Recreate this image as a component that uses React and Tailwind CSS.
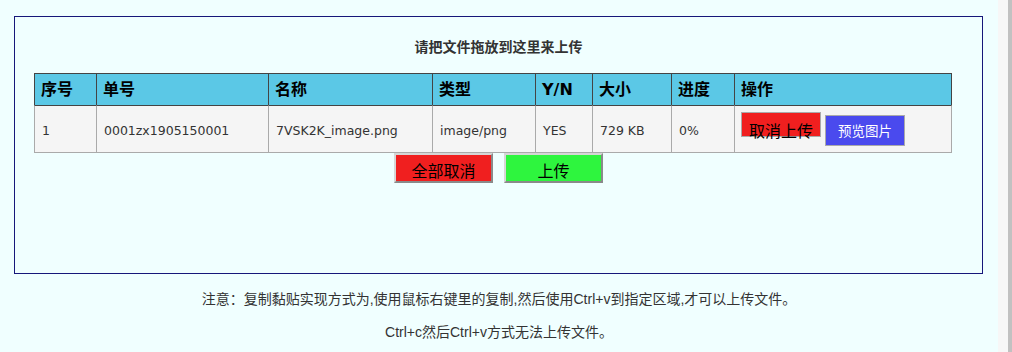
const head = "h-[32px] border-l border-t border-[#444] bg-[#5bc8e6] flex items-center pl-[6px] font-bold text-[16px] text-black";
const cell = "h-[48px] border-l border-b border-[#aaa] border-t border-t-[#444] bg-[#f5f5f5] flex items-center pl-[7px] pt-[5px] text-[12.5px] text-[#333] whitespace-nowrap";

export default function App() {
  return (
    <div className="flex w-[1012px] h-[352px] bg-[#f0ffff] overflow-hidden font-['DejaVu_Sans','Noto_Sans_CJK_SC',sans-serif]">
      <main className="w-[998px] shrink-0">
        <section className="mt-[16px] ml-[14px] mr-[15px] h-[258px] border border-[#17177a]">
          <h2 className="pt-[19px] text-center text-[14px] leading-[20px] font-bold text-[#333] font-['Noto_Sans_CJK_SC',sans-serif]">
            请把文件拖放到这里来上传
          </h2>
          <div className="mt-[17px] ml-[19px] w-[918px]">
            <div className="grid grid-cols-[62px_172px_164px_103px_57px_79px_63px_218px]">
              <div className={head}>序号</div>
              <div className={head}>单号</div>
              <div className={head}>名称</div>
              <div className={head}>类型</div>
              <div className={head + " text-[13.5px]"}>Y/N</div>
              <div className={head}>大小</div>
              <div className={head}>进度</div>
              <div className={head + " border-r"}>操作</div>
            </div>
            <div className="grid grid-cols-[62px_172px_164px_103px_57px_79px_63px_218px]">
              <div className={cell}>1</div>
              <div className={cell}>0001zx1905150001</div>
              <div className={cell}>7VSK2K_image.png</div>
              <div className={cell}>image/png</div>
              <div className={cell}>YES</div>
              <div className={cell}>729 KB</div>
              <div className={cell}>0%</div>
              <div className="h-[48px] border-l border-r border-b border-[#aaa] border-t border-t-[#444] bg-[#f5f5f5] flex items-start pl-[6px] pt-[6px]">
                <button className="h-[25px] w-[80px] border border-[#aaa] bg-[#f01f1f] text-[16px] leading-[35px] text-center text-black whitespace-nowrap font-['Noto_Sans_CJK_SC',sans-serif]">
                  取消上传
                </button>
                <button className="mt-[3px] ml-[4px] h-[31px] w-[80px] border border-[#aaa] bg-[#4a4aee] text-white text-[13.5px] flex items-center justify-center font-['Noto_Sans_CJK_SC',sans-serif]">
                  预览图片
                </button>
              </div>
            </div>
          </div>
          <div className="flex justify-center gap-[11px]">
            <button className="h-[30px] w-[99px] border-2 border-t-[#d6d6d6] border-l-[#d6d6d6] border-r-[#8a8a8a] border-b-[#8a8a8a] bg-[#f01f1f] text-[16px] text-black flex items-center justify-center pt-[3px] font-['Noto_Sans_CJK_SC',sans-serif]">
              全部取消
            </button>
            <button className="h-[30px] w-[99px] border-2 border-t-[#d6d6d6] border-l-[#d6d6d6] border-r-[#8a8a8a] border-b-[#8a8a8a] bg-[#2ef53e] text-[16px] text-black flex items-center justify-center pt-[3px] font-['Noto_Sans_CJK_SC',sans-serif]">
              上传
            </button>
          </div>
        </section>
        <p className="mt-[9px] leading-[33px] text-center text-[14px] text-[#333] font-['Liberation_Sans','Noto_Sans_CJK_SC',sans-serif]">
          注意：复制黏贴实现方式为,使用鼠标右键里的复制,然后使用Ctrl+v到指定区域,才可以上传文件。
        </p>
        <p className="leading-[33px] text-center text-[14px] text-[#333] font-['Liberation_Sans','Noto_Sans_CJK_SC',sans-serif]">
          Ctrl+c然后Ctrl+v方式无法上传文件。
        </p>
      </main>
      <div className="w-[10px] shrink-0 bg-[#f7f7f7]" />
      <div className="w-[4px] shrink-0 bg-[#c1c1c1]" />
    </div>
  );
}
